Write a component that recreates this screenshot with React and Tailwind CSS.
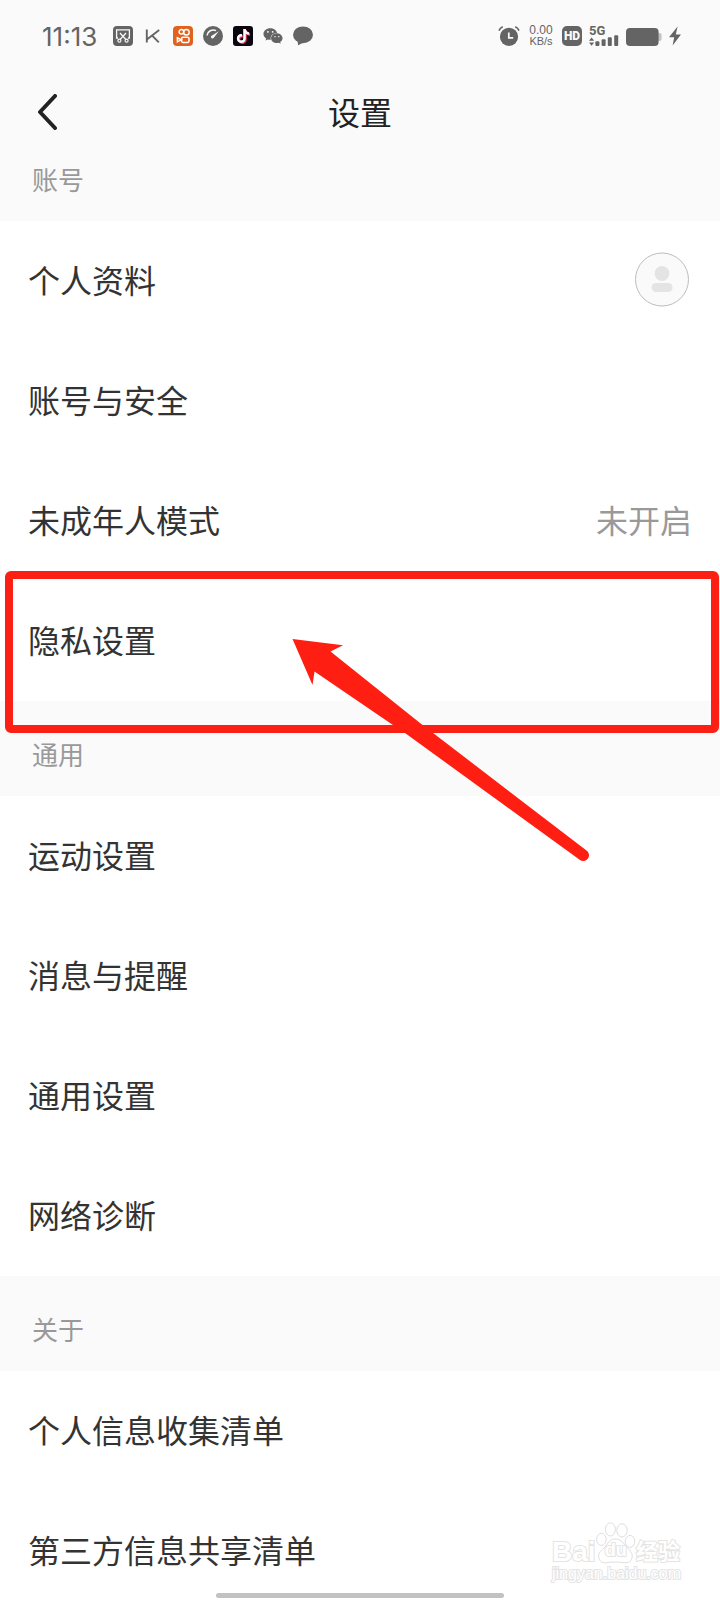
import React from 'react';
import { FaTiktok, FaWeixin } from 'react-icons/fa';

const sections = [
  {
    title: '账号',
    items: [
      { label: '个人资料', avatar: true },
      { label: '账号与安全' },
      { label: '未成年人模式', value: '未开启' },
      { label: '隐私设置', marked: true },
    ],
  },
  {
    title: '通用',
    items: [
      { label: '运动设置' },
      { label: '消息与提醒' },
      { label: '通用设置' },
      { label: '网络诊断' },
    ],
  },
  {
    title: '关于',
    items: [{ label: '个人信息收集清单' }, { label: '第三方信息共享清单' }],
  },
];

const ScreenshotIcon = () => (
  <svg className="size-5" viewBox="0 0 20 20" fill="none" stroke="#fafafa">
    <rect width="20" height="20" rx="4" fill="#646464" stroke="none" />
    <path d="M5 12H3.6V3.9h12.8V12H15" strokeWidth="1.3" />
    <path d="M7 7l5.8 6.4M13 7l-5.8 6.4" strokeWidth="1.4" />
    <circle cx="6.4" cy="14.7" r="1.5" strokeWidth="1.2" />
    <circle cx="13.6" cy="14.7" r="1.5" strokeWidth="1.2" />
  </svg>
);

const KeepIcon = () => (
  <svg className="size-5" viewBox="0 0 20 20" fill="none" stroke="#646464" strokeWidth="1.9">
    <path d="M3.8 3.6v13M16.2 4L4.2 13.2M9.2 9.6l6.6 6.8" />
  </svg>
);

const KwaiIcon = () => (
  <svg className="size-5" viewBox="0 0 20 20" fill="none" stroke="#fff" strokeWidth="1.5">
    <rect width="20" height="20" rx="4" fill="#e2611c" stroke="none" />
    <circle cx="8.4" cy="5.8" r="2.3" />
    <circle cx="13.4" cy="6.2" r="2.8" />
    <rect x="8.6" y="11.2" width="7.4" height="5.2" rx="1.4" />
    <path d="M8.4 13.8L4.4 11.8v4z" />
  </svg>
);

const GaugeIcon = () => (
  <svg className="size-5" viewBox="0 0 20 20">
    <circle cx="10" cy="10" r="10" fill="#646464" />
    <path d="M4 9.5A6.3 6.3 0 0 1 13 4.6" fill="none" stroke="#fafafa" strokeWidth="1.5" />
    <path d="M15.8 5.2l-5.2 6.9a1.6 1.6 0 0 1-2.3-2.2z" fill="#fafafa" />
  </svg>
);

const DouyinIcon = () => (
  <span className="relative flex size-5 items-center justify-center rounded-[3px] bg-[#0b0510]">
    <FaTiktok className="absolute top-[3px] left-[3px] size-3.5 text-[#35d5dc]" />
    <FaTiktok className="absolute top-1 left-1 size-3.5 text-[#e8395f]" />
    <FaTiktok className="relative size-3.5 text-white" />
  </span>
);

const BubbleIcon = () => (
  <svg className="size-5" viewBox="0 0 20 20" fill="#646464">
    <ellipse cx="10" cy="8.8" rx="10" ry="8.4" />
    <path d="M4.5 14l.6 5.2 6-3z" />
  </svg>
);

const AlarmIcon = () => (
  <svg className="h-5 w-[22px]" viewBox="0 0 22 20" fill="none">
    <circle cx="11" cy="10.8" r="9.1" fill="#646464" />
    <path d="M10.8 6.4v5.4h4.4" stroke="#fafafa" strokeWidth="1.7" />
    <path d="M1 4.6Q2 2 4.8 .8M21 4.6Q20 2 17.2 .8" stroke="#646464" strokeWidth="1.6" />
  </svg>
);

const SignalIcon = () => (
  <svg className="h-7 w-[30px]" viewBox="0 -4 30 28" fill="#646464">
    <text x="0" y="9" fontSize="13" fontWeight="700" fontFamily="Roboto, sans-serif">5G</text>
    <path d="M0 14.8L2.6 11.4L5.2 14.8zM0 16.4h5.2L2.6 19.8z" />
    <rect x="6.4" y="15.2" width="4" height="4.8" rx="1" />
    <rect x="12.6" y="13.2" width="4" height="6.8" rx="1" />
    <rect x="18.8" y="11.2" width="4" height="8.8" rx="1" />
    <rect x="25.2" y="9.2" width="4" height="10.8" rx="1" />
  </svg>
);

const BatteryIcon = () => (
  <svg className="h-5 w-9" viewBox="0 0 36 20">
    <rect x="31" y="7" width="4.6" height="8" rx="2" fill="#c4c4c4" />
    <rect x="0" y="2" width="32.6" height="18" rx="4" fill="#646464" />
  </svg>
);

const BoltIcon = () => (
  <svg className="h-5 w-3" viewBox="0 0 12 20" fill="#646464">
    <path d="M8.6 .6L0 11.2h5.2L3.6 19.6L12 8.4H6.8z" />
  </svg>
);

const StatusBar = () => (
  <div className="flex h-[72px] shrink-0 items-center justify-between pr-[39px] pl-[42px]">
    <div className="flex items-center">
      <span className="w-[71px] pt-0.5 font-['Inter',sans-serif] text-[26px] leading-none text-[#646464]">11:13</span>
      <div className="flex items-center gap-2.5">
        <ScreenshotIcon />
        <KeepIcon />
        <KwaiIcon />
        <GaugeIcon />
        <DouyinIcon />
        <FaWeixin className="size-5 text-[#646464]" />
        <BubbleIcon />
      </div>
    </div>
    <div className="flex items-center gap-[7px] text-[#646464]">
      <AlarmIcon />
      <div className="w-7 text-center font-['Liberation_Sans',sans-serif] text-[12px] leading-[11px]">
        <div>0.00</div>
        <div className="text-[11px]">KB/s</div>
      </div>
      <span className="flex size-5 items-center justify-center rounded-[5px] bg-[#646464] font-['Roboto',sans-serif] text-[12px] font-black text-[#fafafa]">
        HD
      </span>
      <SignalIcon />
      <BatteryIcon />
      <BoltIcon />
    </div>
  </div>
);

const Avatar = () => (
  <svg className="size-[60px]" viewBox="0 0 60 60">
    <circle cx="30" cy="30.5" r="26.5" fill="#fafafa" stroke="#bdbdbd" />
    <circle cx="30" cy="24.5" r="7.4" fill="#e4e4e4" />
    <rect x="19.6" y="34" width="21" height="9" rx="4.5" fill="#e4e4e4" />
  </svg>
);

// red frame and arrow pointing at the row
const Marker = () => (
  <>
    <div className="pointer-events-none absolute -top-2.5 right-px left-[5px] z-10 h-[162px] rounded-md border-8 border-[#fb1f14]" />
    <svg
      className="pointer-events-none absolute top-[39px] left-[280px] z-10 h-[250px] w-[330px]"
      viewBox="0 0 330 250"
      fill="#fe1f12"
    >
      <path d="M12.5 19L63 25.2L50.5 31.5L140 103L306.5 230.5A5.6 5.6 0 0 1 300 240L125 113L110 103L34.5 51.5L32.5 65z" />
    </svg>
  </>
);

const Row = ({ item }) => (
  <li className="relative">
    <a href="#" className="flex h-[120px] items-center justify-between bg-white px-7 pb-1 text-[32px] text-[#333333]">
      <span>{item.label}</span>
      {item.avatar && <Avatar />}
      {item.value && <span className="text-[#999999]">{item.value}</span>}
    </a>
    {item.marked && <Marker />}
  </li>
);

const Watermark = () => (
  <div className="pointer-events-none absolute right-10 bottom-4 w-32 text-white [paint-order:stroke_fill] [-webkit-text-stroke:2px_#e4e4e4]">
    <div className="flex items-end justify-between font-['Liberation_Sans','Noto_Sans_CJK_SC',sans-serif] font-bold">
      <span className="text-[28px] leading-6">Bai</span>
      <span className="relative">
        <svg className="h-[42px] w-10 [paint-order:normal]" viewBox="0 0 40 42" fill="#fff" stroke="#dedede">
          <ellipse cx="5.4" cy="17.4" rx="4.8" ry="6" />
          <ellipse cx="14.4" cy="7.4" rx="5" ry="6.6" />
          <ellipse cx="26" cy="8.4" rx="5.2" ry="6.6" />
          <ellipse cx="34" cy="19.4" rx="4.8" ry="6" />
          <path d="M19 17c-6 0-7 5-11 9s-6.500 5.500-5 10.500 6 4.500 9 4 11-.5 15 0 8 0 9-4.500-1.500-7-5-10.500-5-8.500-12-8.500z" />
        </svg>
        <span className="absolute inset-x-0 bottom-1 text-center text-[18px] leading-5">du</span>
      </span>
      <span className="text-[22px] leading-6">经验</span>
    </div>
    <div className="text-center font-['Liberation_Sans',sans-serif] text-[16px] leading-5">jingyan.baidu.com</div>
  </div>
);

const App = () => {
  return (
    <div
      lang="zh-CN"
      className="relative flex h-screen flex-col overflow-hidden bg-[#fafafa] font-['Noto_Sans_CJK_SC',sans-serif]"
    >
      <StatusBar />
      <header className="grid h-20 shrink-0 grid-cols-3 items-center px-7">
        <button type="button" aria-label="返回" className="w-10 pl-2">
          <svg
            className="h-9 w-[22px]"
            viewBox="0 0 22 36"
            fill="none"
            stroke="#222222"
            strokeWidth="4"
            strokeLinecap="round"
            strokeLinejoin="round"
          >
            <path d="M19 2L4 18L19 34" />
          </svg>
        </button>
        <h1 className="pb-0.5 text-center text-[32px] text-[#222222]">设置</h1>
      </header>

      <main className="flex-1">
        {sections.map((section, i) => (
          <section key={section.title}>
            <h2
              className={`${i === 0 ? 'pt-[13px]' : 'pt-[39px]'} px-8 pb-7 text-[26px] leading-7 text-[#999999]`}
            >
              {section.title}
            </h2>
            <ul>
              {section.items.map((item) => (
                <Row key={item.label} item={item} />
              ))}
            </ul>
          </section>
        ))}
      </main>

      <Watermark />
      <div className="absolute inset-x-0 bottom-0.5 mx-auto h-[5px] w-2/5 rounded-full bg-[#c2c2c2]" />
    </div>
  );
};

export default App;
